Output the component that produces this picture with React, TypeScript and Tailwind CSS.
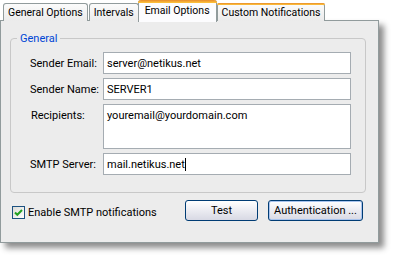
import React from 'react'

const tabs = ['General Options', 'Intervals', 'Email Options', 'Custom Notifications']

function Tab({ label, active, hot }: { label: string; active?: boolean; hot?: boolean }) {
  if (active) {
    return (
      <div className="relative z-10 -mx-[1px] -mb-[1px] flex h-[22px] items-start rounded-t-[3px] border-x border-[#919b9c] bg-[#fcfcfe]">
        <div className="absolute inset-x-[-1px] top-0 h-[3px] rounded-t-[3px] bg-gradient-to-b from-[#e68b2c] to-[#ffc73c]" />
        <span className="px-[6px] pt-[4px] text-[10.5px] leading-[13px]">{label}</span>
      </div>
    )
  }
  return (
    <div className="relative ml-[1px] flex h-[18px] items-start rounded-t-[3px] border-x border-t border-[#919b9c] bg-gradient-to-b from-[#fbfbfb] to-[#ebebeb]">
      {hot && (
        <div className="absolute inset-x-[-1px] top-[-1px] h-[2px] rounded-t-[3px] bg-gradient-to-b from-[#e68b2c] to-[#ffc73c]" />
      )}
      <span className="px-[4px] pt-[2px] text-[10.5px] leading-[13px]">{label}</span>
    </div>
  )
}

function Field({ label, value, tall, caret }: { label: string; value: string; tall?: boolean; caret?: boolean }) {
  return (
    <div className={'flex ' + (tall ? 'items-start' : 'items-center')}>
      <div className={'w-[73px] text-[11px] leading-[13px] ' + (tall ? 'pl-[1px] pt-[5px]' : '')}>{label}</div>
      <div
        className={
          'flex w-[248px] border border-[#a5acb2] bg-white px-[3px] text-[11px] leading-[13px] ' +
          (tall ? 'h-[45px] items-start pt-[4px]' : 'h-[22px] items-center')
        }
      >
        <span>{value}</span>
        {caret && <span className="h-[13px] w-[1px] bg-black" />}
      </div>
    </div>
  )
}

export default function App() {
  return (
    <div className="h-[256px] w-[393px] bg-white font-['Roboto',sans-serif] text-black">
      <div className="flex h-[21px] items-end pl-[2px]">
        {tabs.map((t) => (
          <Tab key={t} label={t} active={t === 'Email Options'} hot={t === 'Custom Notifications'} />
        ))}
      </div>
      <div className="-mt-[1px] flex h-[223px] w-[379px] flex-col border border-[#919b9c] bg-[#ececec] shadow-[5px_5px_6px_rgba(0,0,0,0.45)]">
        <div className="relative ml-[9px] mt-[17px] flex h-[155px] w-[356px] flex-col gap-[4px] rounded-[4px] border border-[#c8c8c8] pb-[16px] pl-[19px] pt-[13px]">
          <span className="absolute left-[6px] top-[-7px] bg-[#ececec] px-[3px] text-[11px] leading-[13px] text-[#0046d5]">
            General
          </span>
          <Field label="Sender Email:" value="server@netikus.net" />
          <Field label="Sender Name:" value="SERVER1" />
          <Field label="Recipients:" value="youremail@yourdomain.com" tall />
          <Field label="SMTP Server:" value="mail.netikus.net" caret />
        </div>
        <div className="mt-[7px] flex h-[21px] items-center pl-[11px] pr-[15px]">
          <div className="mt-[3px] flex items-center gap-[3px]">
            <div className="flex h-[13px] w-[13px] items-center justify-center border border-[#1c5180] bg-gradient-to-br from-[#dcdcd7] to-white">
              <svg width="9" height="9" viewBox="0 0 9 9">
                <path d="M1 4.5 L3.3 6.8 L8 2" fill="none" stroke="#21a121" strokeWidth="2" />
              </svg>
            </div>
            <span className="text-[11px] leading-[13px]">Enable SMTP notifications</span>
          </div>
          <div className="ml-auto flex gap-[10px]">
            <button className="h-[21px] w-[73px] rounded-[3px] border border-[#003c74] bg-gradient-to-b from-white to-[#d8d9e4] text-[11px] leading-[13px]">
              Test
            </button>
            <button className="h-[21px] w-[95px] rounded-[3px] border border-[#003c74] bg-gradient-to-b from-white to-[#d8d9e4] text-[11px] leading-[13px] shadow-[inset_0_0_0_1px_#a9c4ee]">
              Authentication ...
            </button>
          </div>
        </div>
      </div>
    </div>
  )
}
